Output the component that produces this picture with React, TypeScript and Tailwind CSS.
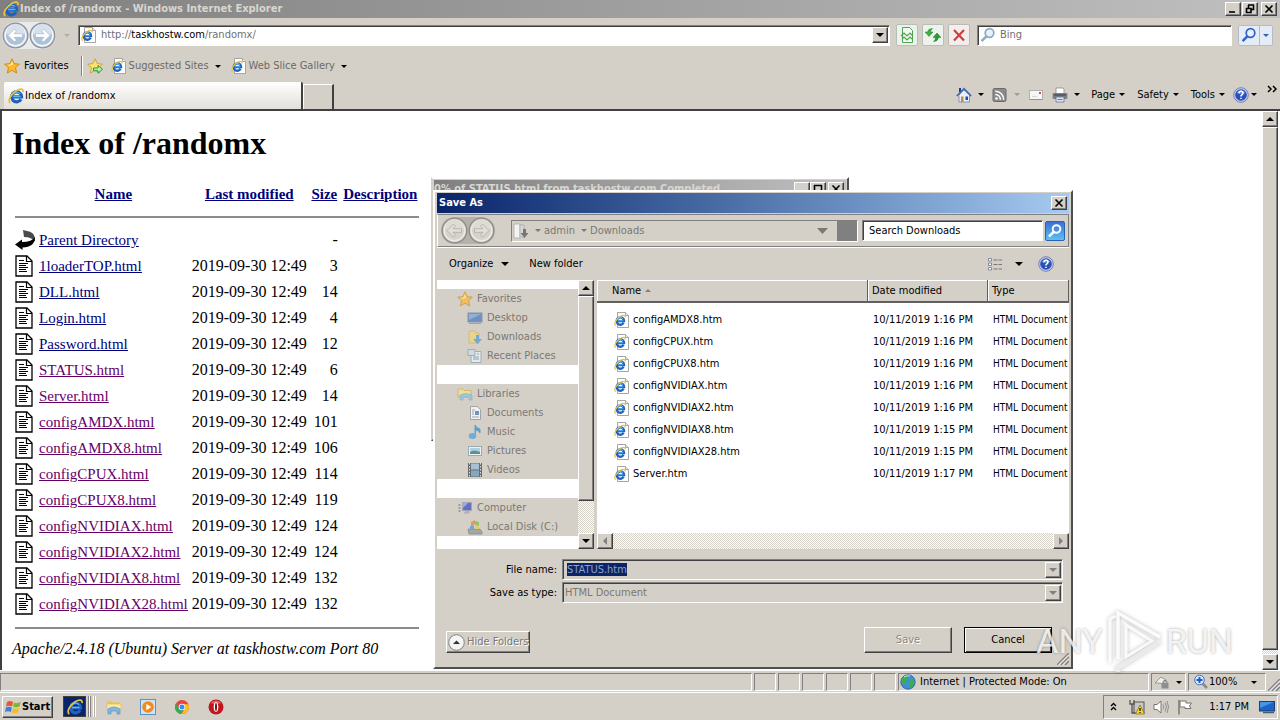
import { useState } from "react";
import type { ReactNode } from "react";
import clsx from "clsx";

const UI_FONT = "font-['DejaVu_Sans_Condensed','Liberation_Sans',sans-serif]";
const RAISED = "bg-[#d4d0c8] border border-t-white border-l-white border-r-[#404040] border-b-[#404040] shadow-[inset_-1px_-1px_0_#808080]";
const SUNKEN = "border border-t-[#808080] border-l-[#808080] border-r-white border-b-white shadow-[inset_1px_1px_0_#404040]";
const CELL = "border border-t-[#808080] border-l-[#808080] border-r-white border-b-white";
const DITHER = "bg-[repeating-conic-gradient(#ffffff_0_25%,#d4d0c8_0_50%)] bg-[length:2px_2px]";

const INDEX_FILES = [
  { name: "1loaderTOP.html", size: "3" },
  { name: "DLL.html", size: "14" },
  { name: "Login.html", size: "4" },
  { name: "Password.html", size: "12" },
  { name: "STATUS.html", size: "6", visited: true },
  { name: "Server.html", size: "14", visited: true },
  { name: "configAMDX.html", size: "101", visited: true },
  { name: "configAMDX8.html", size: "106", visited: true },
  { name: "configCPUX.html", size: "114", visited: true },
  { name: "configCPUX8.html", size: "119", visited: true },
  { name: "configNVIDIAX.html", size: "124", visited: true },
  { name: "configNVIDIAX2.html", size: "124", visited: true },
  { name: "configNVIDIAX8.html", size: "132", visited: true },
  { name: "configNVIDIAX28.html", size: "132", visited: true },
];

const SAVED_FILES = [
  ["configAMDX8.htm", "10/11/2019 1:16 PM"],
  ["configCPUX.htm", "10/11/2019 1:16 PM"],
  ["configCPUX8.htm", "10/11/2019 1:16 PM"],
  ["configNVIDIAX.htm", "10/11/2019 1:16 PM"],
  ["configNVIDIAX2.htm", "10/11/2019 1:16 PM"],
  ["configNVIDIAX8.htm", "10/11/2019 1:15 PM"],
  ["configNVIDIAX28.htm", "10/11/2019 1:15 PM"],
  ["Server.htm", "10/11/2019 1:17 PM"],
];

type IconProps = { className?: string };

function Svg({ size = 16, className, children }: { size?: number; className?: string; children: ReactNode }) {
  return (
    <svg width={size} height={size} viewBox="0 0 16 16" className={clsx("shrink-0", className)} aria-hidden="true">
      {children}
    </svg>
  );
}

function Caret({ className = "text-black" }: IconProps) {
  return (
    <svg width="6" height="3" viewBox="0 0 6 3" className={clsx("shrink-0", className)} aria-hidden="true">
      <path d="M0 0H6L3 3Z" fill="currentColor" />
    </svg>
  );
}

function WideCaret() {
  return (
    <svg width="8" height="4" viewBox="0 0 8 4" className="shrink-0" aria-hidden="true">
      <path d="M0 0H8L4 4Z" fill="#000" />
    </svg>
  );
}

function Arrow({ dir, className = "text-black" }: { dir: "up" | "down" | "left" | "right"; className?: string }) {
  const d = { up: "M0 6H8L4 2Z", down: "M0 2H8L4 6Z", left: "M6 0V8L2 4Z", right: "M2 0V8L6 4Z" }[dir];
  return (
    <svg width="8" height="8" viewBox="0 0 8 8" className={className} aria-hidden="true">
      <path d={d} fill="currentColor" />
    </svg>
  );
}

function IeMark() {
  return (
    <>
      <path d="M13 11.2A5 5 0 1 1 13.6 8.9H5" fill="none" stroke="#1d62bd" strokeWidth="3.2" />
      <path d="M4.200 7A4.600 4.600 0 0 1 12 5.800M5 8.500H12.500" fill="none" stroke="#58b4f2" strokeWidth="1.400" />
      <path d="M2.400 15C-1 13.500 2.800 5.800 8.300 2.700 11.800.7 15.800.2 15 4.200" fill="none" stroke="#edc03a" strokeWidth="1.700" />
    </>
  );
}

function IeIcon({ className }: IconProps) {
  return <Svg className={className}><IeMark /></Svg>;
}

function IePageIcon() {
  return (
    <Svg>
      <path d="M3.5.5H11.5L14.5 3.5V15.5H3.5Z" fill="#fff" stroke="#a5a5a5" />
      <path d="M11.5.5V3.5H14.5" fill="#eee" stroke="#a5a5a5" />
      <g transform="translate(0 2.500) scale(.74)"><IeMark /></g>
    </Svg>
  );
}

function StarIcon({ className }: IconProps) {
  return (
    <Svg className={className}>
      <path d="M8 .8 10.2 5.6 15.4 6.2 11.5 9.7 12.7 15 8 12.3 3.3 15 4.5 9.7.6 6.2 5.8 5.6Z" fill="#fcb92c" stroke="#c77f16" strokeWidth=".8" />
      <path d="M8 3 9.3 6.6 6 8 3 7 6.5 6.4Z" fill="#ffe79b" />
    </Svg>
  );
}

function AddFavoriteIcon() {
  return (
    <Svg>
      <path d="M8 .8 10.2 5.6 15.4 6.2 11.5 9.7 12.7 15 8 12.3 3.3 15 4.5 9.7.6 6.2 5.8 5.6Z" fill="#fde36e" stroke="#c99a1c" strokeWidth=".8" />
      <path d="M6.500 10H11V7.500L15.500 11.300 11 15.200V12.700H6.500Z" fill="#b9efa9" stroke="#2b9a32" strokeWidth="1" />
    </Svg>
  );
}

function HelpIcon() {
  return (
    <Svg>
      <circle cx="8" cy="8" r="7.3" fill="#c3cff0" stroke="#5b6fae" strokeWidth=".8" />
      <circle cx="8" cy="8" r="5.8" fill="#2b50b8" />
      <path d="M3.5 6A5 5 0 0 1 12.5 6Q8 8 3.5 6Z" fill="#6d8fe0" />
      <path d="M6 6.3Q6 4.3 8 4.3T10 6.2Q10 7.4 8 8.6V9.6M8 10.8V12" fill="none" stroke="#fff" strokeWidth="1.5" />
    </Svg>
  );
}

function HomeIcon() {
  return (
    <Svg>
      <path d="M3 1H5V5H3Z" fill="#1d3a94" />
      <path d="M3 8 8 3 13.5 8V15H3Z" fill="#e9eefb" stroke="#6b82b8" strokeWidth=".8" />
      <path d="M.8 9 8 1.6 15.2 9" fill="none" stroke="#4966b1" strokeWidth="1.7" />
      <path d="M5 9.5H7.5V15H5Z" fill="#c58b3e" />
      <path d="M9.5 9.5H12V13H9.5Z" fill="#1c4fa8" />
    </Svg>
  );
}

function FeedIcon() {
  return (
    <Svg>
      <rect x="1" y="1.5" width="13" height="13" rx="1.5" fill="#8b8b8b" stroke="#6b6b6b" />
      <circle cx="4.5" cy="11.5" r="1.3" fill="#fff" />
      <path d="M3.3 7.5A5 5 0 0 1 8.4 12.8M3.3 4.2A8.3 8.3 0 0 1 11.7 12.8" fill="none" stroke="#fff" strokeWidth="1.5" />
    </Svg>
  );
}

function MailIcon() {
  return (
    <Svg>
      <rect x="1.5" y="3.5" width="13" height="9" fill="#f6f6f6" stroke="#b2b2b2" />
      <path d="M1.5 12.5H14.5" stroke="#8794ad" />
      <rect x="11" y="5" width="2" height="2" fill="#d2534b" />
      <path d="M4 9.5H9" stroke="#d8d8d8" />
    </Svg>
  );
}

function PrinterIcon() {
  return (
    <Svg>
      <path d="M4 1H11L12 2V7H4Z" fill="#fff" stroke="#8c8c8c" strokeWidth=".8" />
      <rect x=".6" y="6" width="14.8" height="6" rx="1" fill="#7b7f88" />
      <path d="M2 8H14" stroke="#3c3f46" />
      <path d="M4 10H12V15H4Z" fill="#dfe8f7" stroke="#66718b" strokeWidth=".8" />
      <path d="M5.5 12.5H10.5" stroke="#4c7acb" />
    </Svg>
  );
}

function MagnifierIcon({ color, className }: { color: string; className?: string }) {
  return (
    <Svg className={className}>
      <circle cx="9.5" cy="6" r="4.3" fill="#e6f2fc" stroke={color} strokeWidth="1.7" />
      <path d="M6.3 9.3 1.6 14.2" stroke={color} strokeWidth="2.4" />
    </Svg>
  );
}

function RoundNav({ dir, disabled }: { dir: "left" | "right"; disabled?: boolean }) {
  return (
    <button aria-label={dir === "left" ? "Back" : "Forward"} className="flex">
      <svg width="27" height="27" viewBox="0 0 27 27" aria-hidden="true">
        <circle cx="13.5" cy="13.5" r="12.3" fill={disabled ? "#d0ccc4" : "#c6d2df"} stroke={disabled ? "#8f8c86" : "#8b9199"} strokeWidth="1.3" />
        <circle cx="13.5" cy="13.5" r="10.3" fill={disabled ? "#d6d2ca" : "#adc2d8"} stroke={disabled ? "#eceae6" : "#f5f8fb"} strokeWidth="1.4" />
        <path d="M4 12A9.5 9.5 0 0 1 23 12Q13.5 15 4 12Z" fill={disabled ? "#dedbd4" : "#d6e1ec"} />
        <path
          d="M6 13.500 12.500 7 14.500 9 12 11.700H20.500V15.300H12L14.500 18 12.500 20Z"
          transform={dir === "right" ? "matrix(-1 0 0 1 27 0)" : undefined}
          fill={disabled ? "#e2dfd9" : "#fff"}
          stroke={disabled ? "#a9a6a0" : "#a9b8c8"}
          strokeWidth=".7"
        />
      </svg>
    </button>
  );
}

function TextFileIcon() {
  return (
    <svg width="20" height="22" viewBox="0 0 20 22" aria-hidden="true">
      <path d="M1 1H12L17 6V21H1Z" fill="#fff" stroke="#000" strokeWidth="1.3" />
      <path d="M11.5 1V6.5H17" fill="none" stroke="#000" strokeWidth="1.2" />
      <path d="M4 5.5H9M4 8.5H13M4 10.5H11M4 12.5H13M4 14.5H11M4 16.5H12" stroke="#000" />
    </svg>
  );
}

function BackIcon() {
  return (
    <svg width="20" height="22" viewBox="0 0 20 22" aria-hidden="true">
      <path d="M8 1 12 2Q19 3 20 9V13Q17 8 9 8Z" fill="#4a4a4a" />
      <path d="M20 8Q20 18 7.500 18.500V21L0 15.500 7 10.500V13Q17 13 20 8Z" fill="#000" />
    </svg>
  );
}

function TitleButton({ kind, className }: { kind: "min" | "max" | "restore" | "close"; className?: string }) {
  const d = {
    min: "M1 8H7",
    max: "M1 1.5H9M1.5 1V8.5H8.5V1",
    restore: "M3 1H9M3.5 1V4M8.5 1V6M6 5.5H9M1 4.5H6.5M1.5 4V8.5H6V4",
    close: "M1.5 1.5 8.5 8.5M8.5 1.5 1.5 8.5",
  }[kind];
  return (
    <button aria-label={kind} className={clsx(RAISED, "flex h-[14px] w-[16px] items-center justify-center", className)}>
      <svg width="10" height="10" viewBox="0 0 10 10" aria-hidden="true">
        <path d={d} fill="none" stroke="#000" strokeWidth="1.6" />
      </svg>
    </button>
  );
}

function ScrollButton({ dir, dim }: { dir: "up" | "down" | "left" | "right"; dim?: boolean }) {
  return (
    <button aria-label={`Scroll ${dir}`} className={clsx(RAISED, "flex size-4 shrink-0 items-center justify-center")}>
      <Arrow dir={dir} className={dim ? "text-[#808080]" : "text-black"} />
    </button>
  );
}

function BrowserHeader() {
  return (
    <header className="bg-[#d4d0c8]">
      <div className="flex h-[18px] items-center gap-px bg-linear-to-r from-[#808080] to-[#c0c0c0] pr-[3px] pl-[3px]">
        <IeIcon />
        <h1 className="flex-1 font-bold text-[#d9d6cf]">Index of /randomx - Windows Internet Explorer</h1>
        <TitleButton kind="min" />
        <TitleButton kind="restore" />
        <TitleButton kind="close" className="ml-0.5" />
      </div>

      <div className="flex h-[34px] items-center gap-1 pr-[7px] pl-[2px]">
        <div className="flex rounded-full bg-[#e9eaea]">
          <RoundNav dir="left" />
          <RoundNav dir="right" />
        </div>
        <Caret className="mx-1 text-[#b0aca4]" />
        <div className={clsx(SUNKEN, "flex h-[21px] flex-1 items-center gap-1 bg-white pr-px pl-0.5")}>
          <IePageIcon />
          <a href="#" className="flex-1 text-[#707070]">http://<span className="text-black">taskhostw.com</span>/randomx/</a>
          <ScrollButton dir="down" />
        </div>
        <button aria-label="Compatibility view" className="ml-0.5 rounded-xs border border-[#b5bfb5] bg-[#eef2ee] p-0.5">
          <Svg>
            <path d="M3.5.5H10.5L13.5 3.5V15.5H3.5Z" fill="#f4fbf4" stroke="#4ca44f" />
            <path d="M2 9 5 6 8 9 11 6 14 9M3 12 5 10 8 13 11 10 13 12" fill="none" stroke="#4ca44f" strokeWidth="1.2" />
          </Svg>
        </button>
        <button aria-label="Refresh" className="rounded-xs border border-[#b5bfb5] bg-[#eef2ee] p-0.5">
          <Svg>
            <path d="M4 9.500 0 5H2.500Q3 1.500 7.500 1.500 5.500 2.500 5.500 5H8Z" fill="#3fae45" stroke="#1d7f25" strokeWidth=".5" />
            <path d="M12 6 16 10.500H13.500Q13 14.500 8.500 14.500 10.500 13.500 10.500 10.500H8Z" fill="#2b9a32" stroke="#1d7f25" strokeWidth=".5" />
          </Svg>
        </button>
        <button aria-label="Stop" className="rounded-xs border border-[#bfb9b5] bg-[#f2eeee] p-0.5">
          <Svg><path d="M3 3 13 13.500M13 3 3 13.500" stroke="#c9403c" strokeWidth="2.2" /></Svg>
        </button>
        <div className={clsx(SUNKEN, "ml-[3px] flex h-[21px] w-[255px] items-center gap-1 bg-white px-0.5")}>
          <MagnifierIcon color="#8fa9c0" />
          <input aria-label="Search" placeholder="Bing" className="min-w-0 flex-1 outline-none placeholder:text-[#707070]" />
        </div>
        <div className="ml-0.5 flex h-[21px] rounded-xs border border-[#b4bccb] bg-[#e6ecf6]">
          <button aria-label="Search the web" className="px-0.5"><MagnifierIcon color="#2f62cf" /></button>
          <button aria-label="Search options" className="border-l border-[#b4bccb] px-[3px]"><Caret className="text-[#2c61b4]" /></button>
        </div>
      </div>

      <div className="flex h-7 items-center pl-1">
        <button className="flex items-center gap-1"><StarIcon /> Favorites</button>
        <span className="mx-1 ml-3 h-5 w-0.5 border-l border-[#808080] bg-white" />
        <button aria-label="Add to favorites"><AddFavoriteIcon /></button>
        <button className="ml-2 flex items-center gap-0.5 text-[#6d6a65]"><IePageIcon />Suggested Sites <Caret className="ml-1 text-black" /></button>
        <button className="ml-2.5 flex items-center gap-0.5 text-[#6d6a65]"><IePageIcon />Web Slice Gallery <Caret className="ml-1 text-black" /></button>
      </div>

      <div className="flex h-[29px] items-stretch pr-0.5 pl-1">
        <button className="mt-0.5 flex w-[299px] items-center gap-px rounded-t-xs border-r-2 border-[#404040] bg-linear-to-b from-white to-[#e3e0da] pl-1 text-left">
          <IeIcon /> Index of /randomx
        </button>
        <button aria-label="New tab" className="mt-1 w-[31px] border-t border-r-2 border-l border-t-white border-r-[#404040] border-l-white" />
        <div className="ml-auto flex items-center">
          <button aria-label="Home" className="flex items-center gap-1.5"><HomeIcon /><Caret /></button>
          <button aria-label="Feeds" className="ml-2 flex items-center gap-1.5"><FeedIcon /><Caret className="text-[#a09c94]" /></button>
          <button aria-label="Read mail" className="ml-2"><MailIcon /></button>
          <button aria-label="Print" className="ml-2 flex items-center gap-1.5"><PrinterIcon /><Caret /></button>
          <button className="ml-[11px] flex items-center gap-1">Page <Caret /></button>
          <button className="ml-3 flex items-center gap-1">Safety <Caret /></button>
          <button className="ml-3 flex items-center gap-1">Tools <Caret /></button>
          <button aria-label="Help" className="ml-2 flex items-center gap-0.5"><HelpIcon /><Caret /></button>
          <button aria-label="More" className="mb-3 ml-2.5">
            <svg width="11" height="8" viewBox="0 0 11 8" aria-hidden="true">
              <path d="M1 1 4 4 1 7M6 1 9 4 6 7" fill="none" stroke="#000" strokeWidth="1.5" />
            </svg>
          </button>
        </div>
      </div>
    </header>
  );
}

function IndexPage() {
  return (
    <main className="flex min-h-0 flex-1 border-t-2 border-l-2 border-[#404040] bg-white">
      <div className="flex-1 overflow-hidden pt-3 pl-2.5 font-['Liberation_Serif',serif] text-base leading-5 text-black">
        <h2 className="mb-[18px] text-[32px] leading-10 font-bold">Index of /randomx</h2>
        <table className="border-separate border-spacing-0.5 leading-5">
          <thead>
            <tr className="h-[22px] text-[15px] text-[#00007a] [&_a]:underline">
              <th className="w-[22px] p-px" />
              <th className="p-px"><a href="#">Name</a></th>
              <th className="p-px"><a href="#">Last modified</a></th>
              <th className="w-[29px] p-px"><a href="#">Size</a></th>
              <th className="w-[79px] p-px"><a href="#">Description</a></th>
            </tr>
            <tr className="h-[19px]"><td colSpan={5} className="p-px"><hr className="border-t-2 border-[#8c8c8c]" /></td></tr>
          </thead>
          <tbody>
            <tr>
              <td className="p-px"><BackIcon /></td>
              <td className="p-px text-[15px] text-[#00007a] underline"><a href="#">Parent Directory</a></td>
              <td />
              <td className="p-px text-right">-</td>
              <td />
            </tr>
            {INDEX_FILES.map((file) => (
              <tr key={file.name}>
                <td className="p-px"><TextFileIcon /></td>
                <td className="p-px text-[15px] underline"><a href="#" className={file.visited ? "text-[#660066]" : "text-[#00007a]"}>{file.name}</a></td>
                <td className="p-px whitespace-nowrap">2019-09-30 12:49</td>
                <td className="p-px text-right">{file.size}</td>
                <td />
              </tr>
            ))}
            <tr className="h-[19px]"><td colSpan={5} className="p-px"><hr className="border-t-2 border-[#8c8c8c]" /></td></tr>
          </tbody>
        </table>
        <address>Apache/2.4.18 (Ubuntu) Server at taskhostw.com Port 80</address>
      </div>
      <div className={clsx(DITHER, "mr-0.5 flex w-4 flex-col")}>
        <ScrollButton dir="up" />
        <div className={clsx(RAISED, "mb-1 flex-1")} />
        <ScrollButton dir="down" />
      </div>
    </main>
  );
}

function StatusBar() {
  return (
    <div className="flex h-[22px] shrink-0 items-stretch gap-0.5 border-t border-white bg-[#d4d0c8] pt-0.5 pb-px">
      <div className={clsx(CELL, "flex-1")} />
      {[0, 1, 2, 3, 4, 5].map((n) => <div key={n} className={clsx(CELL, "w-[22px]")} />)}
      <div className={clsx(CELL, "flex w-[251px] items-center gap-1 pl-px")}>
        <Svg>
          <circle cx="8" cy="8" r="7.2" fill="#3d8fd8" stroke="#235a94" strokeWidth=".8" />
          <path d="M3 3Q7 0 8 3T5 7Q6 10 3 11Q0 7 3 3ZM10 6Q14 5 14.5 8T10 14Q8 10 10 6Z" fill="#3fae4a" />
          <path d="M4 3Q7 1 10 2" fill="none" stroke="#cbe8fa" />
        </Svg>
        Internet | Protected Mode: On
      </div>
      <button aria-label="Privacy" className={clsx(CELL, "flex w-[35px] items-center gap-1.5 pl-0.5")}>
        <Svg>
          <path d="M1 9 7 3 12 6 9 10 5 9Z" fill="#eee" stroke="#999" />
          <rect x="7.500" y="9" width="7" height="5.500" fill="#8e8e8e" />
          <path d="M9 9V7.500Q11 5 13 7.500V9" fill="none" stroke="#777" />
        </Svg>
        <Caret />
      </button>
      <button className={clsx(CELL, "flex w-[78px] items-center pl-1")}>
        <Svg>
          <path d="M9 9 14 14" stroke="#8a8a8a" strokeWidth="2.500" />
          <circle cx="6.500" cy="6" r="4.800" fill="#dcecff" stroke="#3a70c8" />
          <path d="M6.500 3V9M3.500 6H9.500" stroke="#1e59c4" strokeWidth="2" />
        </Svg>
        100% <Caret className="mr-2 ml-auto" />
      </button>
      <Grip />
    </div>
  );
}

function Grip() {
  return (
    <svg width="12" height="12" viewBox="0 0 12 12" className="shrink-0 self-end" aria-hidden="true">
      <path d="M0 12 12 0M4 12 12 4M8 12 12 8" stroke="#808080" strokeWidth="1.5" />
      <path d="M1.500 12 12 1.500M5.500 12 12 5.500" stroke="#fff" strokeWidth=".8" />
    </svg>
  );
}

function Taskbar() {
  return (
    <footer className="flex h-7 shrink-0 items-center border-t border-white bg-[#d4d0c8] pr-[2px] pl-[2px]">
      <button className={clsx(RAISED, "flex h-[22px] items-center gap-px px-0.5 font-bold")}>
        <Svg>
          <path d="M2 3Q5 1 8 3L7 7.500Q4 6 1 7.500Z" fill="#e8562d" />
          <path d="M9 3.500Q12 5 15.500 3L14.500 7.500Q11 9 8 7.500Z" fill="#7cb82f" />
          <path d="M1 8.500Q4 7 6.800 8.500L6 13Q3 11.500 0 13Z" fill="#3a80d8" />
          <path d="M8 9Q11 10.500 14.200 8.800L13 13.500Q10 15 7 13.500Z" fill="#f6bd28" />
        </Svg>
        Start
      </button>
      <button aria-label="Internet Explorer" className="ml-2.5 flex h-[21px] w-[23px] items-center justify-center border border-[#404040] bg-[#0a246a]"><IeIcon /></button>
      <span className="ml-0.5 h-[21px] w-[3px] border-x border-[#808080] bg-white" />
      <span className="ml-0.5 h-[21px] w-[3px] border-x border-white bg-[#b5b1a9]" />
      <button aria-label="Explorer" className="ml-2.5">
        <Svg>
          <path d="M1 2H6L7 3.500H14V6H1Z" fill="#e8c657" />
          <path d="M1 5H15V11H1Z" fill="#fbe9a0" stroke="#d9b84e" strokeWidth=".6" />
          <path d="M2 15V10Q8 6 14 10V15H11V12H5V15Z" fill="#7fb7e6" stroke="#4d8cc4" strokeWidth=".6" />
        </Svg>
      </button>
      <button aria-label="Media Player" className="ml-[18px]">
        <Svg>
          <rect x=".5" y=".5" width="15" height="15" fill="#cfe3f5" stroke="#5d92c9" />
          <circle cx="8" cy="8" r="5.800" fill="#f28a1c" />
          <path d="M6.300 4.800V11.200L11.300 8Z" fill="#fff" />
        </Svg>
      </button>
      <button aria-label="Chrome" className="ml-[18px]">
        <Svg>
          <circle cx="8" cy="8" r="7" fill="#e8453c" />
          <path d="M1.900 4.500A7 7 0 0 0 7.500 15L10 9.500 5.500 10Z" fill="#3aa757" />
          <path d="M14.400 5.200A7 7 0 0 1 7.500 15L11 9 8 5.200Z" fill="#fbc116" />
          <circle cx="8" cy="8" r="3.300" fill="#fff" />
          <circle cx="8" cy="8" r="2.500" fill="#4285f4" />
        </Svg>
      </button>
      <button aria-label="Opera" className="ml-[18px]">
        <Svg>
          <circle cx="8" cy="8" r="7.500" fill="#c1161d" />
          <path d="M2.500 4Q8-1 13.500 4Q8 6 2.500 4Z" fill="#e4605f" />
          <ellipse cx="8" cy="8" rx="2.300" ry="4.800" fill="#fff" />
          <ellipse cx="8" cy="8" rx="1" ry="4" fill="#7d0d12" />
        </Svg>
      </button>
      <div className={clsx(CELL, "ml-auto flex h-6 items-center gap-2 pr-0.5 pl-1.5")}>
        <svg width="7" height="9" viewBox="0 0 7 9" aria-hidden="true"><path d="M1 4 3.500 1.500 6 4M1 8 3.500 5.500 6 8" fill="none" stroke="#000" strokeWidth="1.300" /></svg>
        <Svg className="ml-1">
          <rect x="5" y="3" width="10" height="11" fill="#c8c8c8" stroke="#555" />
          <path d="M1 1V5H5V1M3 5V14H6" fill="none" stroke="#555" strokeWidth="1.300" />
          <path d="M11 6 15.500 15H6.500Z" fill="#fbdb25" stroke="#8a7208" strokeWidth=".8" />
          <path d="M11 9V12M11 13V14" stroke="#000" strokeWidth="1.200" />
        </Svg>
        <Svg>
          <path d="M1 5.500H4L8 2V14L4 10.500H1Z" fill="#fff" stroke="#777" />
          <path d="M10 5.500Q11.500 8 10 10.500M12 3.500Q15 8 12 12.500M14 2Q17 8 14 14" fill="none" stroke="#888" strokeWidth=".9" />
        </Svg>
        <Svg>
          <path d="M2 1V15.500" stroke="#777" strokeWidth="1.500" />
          <path d="M3 2H9V4H14.500L12.500 7 14 9.500H8V8H3Z" fill="#fff" stroke="#777" />
        </Svg>
        <span className="ml-2">1:17 PM</span>
        <Svg className="ml-0.5">
          <rect x=".5" y="2.500" width="15" height="9.500" fill="#1b63c6" stroke="#1a3e78" />
          <path d="M1 3H15L1 9Z" fill="#4a94e6" />
          <path d="M4 13.500H15" stroke="#4e5a6b" strokeWidth="1.500" />
        </Svg>
      </div>
    </footer>
  );
}

function DesktopIcon() {
  return <Svg><rect x="1" y="3" width="14" height="9" fill="#4479bd" stroke="#6b7d96" /><path d="M2 4H14L2 10Z" fill="#75a5dc" /><path d="M2 13.500H14" stroke="#8a949f" /></Svg>;
}

function DownloadsIcon() {
  return <Svg><path d="M2 2H8L9 4H12V14H2Z" fill="#f3d871" stroke="#cdb45e" /><path d="M9 6H12V10H15L10.500 15 6 10H9Z" fill="#4a98d8" /></Svg>;
}

function RecentIcon() {
  return <Svg><path d="M4 3.500H14V14.500H4Z" fill="#f1f5f7" stroke="#86a0b0" /><path d="M1 1.500H8V7.500H1Z" fill="#cfe0ea" stroke="#86a0b0" /><path d="M6 9H12M6 11H12M10 6H12" stroke="#5f93b1" /></Svg>;
}

function LibrariesIcon() {
  return <Svg><path d="M1 3H6L7 4.500H14V11H1Z" fill="#f6e68c" stroke="#cdb050" /><path d="M3 14V9Q9 6 15 9V14H12V11H6V14Z" fill="#8cc4de" stroke="#64a3c2" strokeWidth=".7" /></Svg>;
}

function DocumentsIcon() {
  return <Svg><path d="M3.500 1.500H10L13.500 4.500V14.500H3.500Z" fill="#fff" stroke="#8594a3" /><rect x="8" y="6" width="4" height="4" fill="#4a7cb3" /><path d="M5 5H8M5 7H7M5 9H7M5 12H12" stroke="#8594a3" /></Svg>;
}

function MusicIcon() {
  return <Svg><path d="M8 12V1Q9 4 13 5V9Q11 6 9.500 6" fill="#2f8acb" stroke="#2f8acb" /><ellipse cx="5.500" cy="12" rx="3.800" ry="3" fill="#469fdd" /></Svg>;
}

function PicturesIcon() {
  return <Svg><rect x="1.500" y="3.500" width="13" height="9" fill="#fff" stroke="#8a999f" /><path d="M3 5H13V11H3Z" fill="#9ad3ee" /><path d="M3 9Q7 6 13 9V11H3Z" fill="#2c7784" /></Svg>;
}

function VideosIcon() {
  return <Svg><rect x="1" y="1" width="14" height="14" fill="#3b434e" /><rect x="4" y="1.500" width="8" height="6" fill="#93bcd9" /><rect x="4" y="8.500" width="8" height="6" fill="#6499be" /><path d="M2.500 1V15M13.500 1V15" stroke="#dcdcdc" strokeDasharray="1.500 1.500" /></Svg>;
}

function ComputerIcon() {
  return <Svg><rect x="5.500" y="2.500" width="9" height="8" fill="#3545c4" stroke="#8d93b5" /><path d="M6 3H11L6 8Z" fill="#8f9be6" /><path d="M8 11H12V13H7" stroke="#9496a3" fill="#b7b8c3" /><path d="M2.500 4V13" stroke="#84869a" strokeWidth="2" strokeDasharray="2 1" /></Svg>;
}

function DiskIcon() {
  return <Svg><path d="M1 10H13L15 13V15H2Z" fill="#8f9598" stroke="#6b7276" strokeWidth=".8" /><path d="M4 3 8 1V5L4 7Z" fill="#e0862f" /><path d="M8 2 12 3V7L8 6Z" fill="#7cb842" /><path d="M3 7 7 6V10H3Z" fill="#5a92de" /><path d="M8 6.500 12 7.500V10H8Z" fill="#f0cf35" /></Svg>;
}

const TREE = [
  { label: "Favorites", icon: StarIcon, children: [["Desktop", DesktopIcon], ["Downloads", DownloadsIcon], ["Recent Places", RecentIcon]] },
  { label: "Libraries", icon: LibrariesIcon, children: [["Documents", DocumentsIcon], ["Music", MusicIcon], ["Pictures", PicturesIcon], ["Videos", VideosIcon]] },
  { label: "Computer", icon: ComputerIcon, children: [["Local Disk (C:)", DiskIcon]] },
] as { label: string; icon: () => ReactNode; children: [string, () => ReactNode][] }[];

function FolderTree() {
  return (
    <nav className="flex flex-1 flex-col gap-[19px] bg-white pt-[9px] pb-[13px] text-[#7b7872] [&_svg]:opacity-70">
      {TREE.map(({ label, icon: Icon, children }) => (
        <ul key={label} className="bg-[#d4d0c8]">
          <li className="flex h-[19px] items-center gap-1 pl-5"><Icon />{label}</li>
          {children.map(([name, ChildIcon]) => (
            <li key={name} className="flex h-[19px] items-center gap-1 pl-[30px]"><ChildIcon />{name}</li>
          ))}
        </ul>
      ))}
    </nav>
  );
}

function FileList() {
  return (
    <div className="flex min-w-0 flex-1 flex-col bg-white">
      <div className="flex-1 overflow-hidden">
        <table className="w-full table-fixed border-separate border-spacing-0">
          <thead>
            <tr className="h-[23px] [&>th]:border-r [&>th]:border-b-2 [&>th]:border-[#606060] [&>th]:bg-[#d4d0c8] [&>th]:text-left [&>th]:font-normal [&>th]:shadow-[inset_1px_1px_0_#fff]">
              <th className="pl-[15px]">
                <span className="flex items-center gap-1">Name <Caret className="rotate-180 text-[#808080]" /></span>
              </th>
              <th className="w-[120px] pl-1">Date modified</th>
              <th className="w-[81px] pl-1">Type</th>
            </tr>
          </thead>
          <tbody>
            <tr className="h-1.5"><td colSpan={3} /></tr>
            {SAVED_FILES.map(([name, date]) => (
              <tr key={name} className="h-[22px]">
                <td className="pl-[17px]"><span className="flex items-center gap-[3px]"><IePageIcon />{name}</span></td>
                <td className="pl-[5px] whitespace-nowrap">{date}</td>
                <td className="overflow-hidden pl-[5px] text-[10px] whitespace-nowrap">HTML Document</td>
              </tr>
            ))}
          </tbody>
        </table>
      </div>
      <div className={clsx(DITHER, "flex h-4 justify-between")}>
        <ScrollButton dir="left" dim />
        <ScrollButton dir="right" dim />
      </div>
    </div>
  );
}

function SaveAsDialog() {
  const [fileName, setFileName] = useState("STATUS.htm");

  return (
    <section aria-label="Save As" className="absolute top-[190px] left-[433px] w-[640px] border-2 border-t-white border-r-[#505050] border-b-[#505050] border-l-white bg-[#d4d0c8] p-0.5 pt-px">
      <div className="flex h-5 items-center justify-between bg-linear-to-r from-[#0a246a] to-[#a6caf0] pr-0.5 pl-0.5">
        <h2 className="font-bold text-white">Save As</h2>
        <TitleButton kind="close" />
      </div>

      <div className="mt-px flex h-[33px] items-center border border-t-[#808080] border-r-[#808080] border-b-[#808080] border-l-white px-[3px] shadow-[0_1px_0_#fff]">
        <div className="flex rounded-full bg-[#b5b2ac]">
          <RoundNav dir="left" disabled />
          <RoundNav dir="right" disabled />
        </div>
        <div className={clsx(CELL, "ml-4 flex h-[22px] flex-1 items-center text-[#7b7872]")}>
          <Svg className="ml-px">
            <path d="M1 1H7V15H1Z" fill="#f3f3f3" stroke="#aaa" strokeWidth=".8" />
            <path d="M7 2H11V14H7Z" fill="#d8d8d8" stroke="#aaa" strokeWidth=".8" />
            <path d="M10 6H13V10H15.500L11.500 15 7.500 10H10Z" fill="#777" />
          </Svg>
          <Caret className="mr-[3px] ml-1.5 text-[#7b7872]" />admin
          <Caret className="mr-[3px] ml-1.5 text-[#7b7872]" />Downloads
          <svg width="11" height="6" viewBox="0 0 11 6" className="mr-[9px] ml-auto" aria-hidden="true"><path d="M0 0H11L5.500 6Z" fill="#7b7872" /></svg>
          <button aria-label="Refresh" className="h-5 w-5 bg-[#808080]" />
        </div>
        <input aria-label="Search Downloads" defaultValue="Search Downloads" className={clsx(SUNKEN, "ml-1 h-[21px] w-[181px] bg-white px-1.5")} />
        <button aria-label="Search" className="ml-0.5 rounded-xs border border-[#2a62b4] bg-linear-to-b from-[#3d6fd6] to-[#5cc0f2] p-px">
          <Svg>
            <circle cx="9.500" cy="6" r="3.800" fill="none" stroke="#fff" strokeWidth="2" />
            <path d="M6.500 9 2 13.500" stroke="#fff" strokeWidth="2.500" />
          </Svg>
        </button>
      </div>

      <div className="flex h-[33px] items-center pr-[15px] pl-3">
        <button className="flex items-center gap-2">Organize <WideCaret /></button>
        <button className="ml-5">New folder</button>
        <button aria-label="Change view" className="ml-auto flex items-center gap-3">
          <Svg>
            <path d="M1.500 2.500H4.500V5H1.500ZM1.500 7H4.500V9.500H1.500ZM1.500 11.500H4.500V14H1.500Z" fill="#fff" stroke="#75819a" strokeWidth=".9" />
            <path d="M6.500 4H15M6.500 8.500H15M6.500 13H15" stroke="#777" strokeDasharray="4 1" />
          </Svg>
          <WideCaret />
        </button>
        <button aria-label="Help" className="ml-[15px]"><HelpIcon /></button>
      </div>

      <div className="flex h-[269px]">
        <div className="flex w-[157px]">
          <FolderTree />
          <div className={clsx(DITHER, "flex w-4 flex-col")}>
            <ScrollButton dir="up" />
            <div className={clsx(RAISED, "mb-8 flex-1")} />
            <ScrollButton dir="down" />
          </div>
        </div>
        <div className="ml-[3px] flex min-w-0 flex-1">
          <FileList />
        </div>
      </div>

      <form className="grid grid-cols-[120px_1fr] items-center gap-x-[5px] gap-y-0.5 pt-2.5 pr-[6px]" onSubmit={(e) => e.preventDefault()}>
        <label htmlFor="file-name" className="text-right">File name:</label>
        <div className={clsx(SUNKEN, "flex h-[21px] items-center justify-between px-1 pr-px")}>
          <input
            id="file-name"
            value={fileName}
            onChange={(e) => setFileName(e.target.value)}
            className="field-sizing-content h-[13px] bg-[#0a246a] text-[#91a0bd] outline-none"
          />
          <ScrollButton dir="down" dim />
        </div>
        <label htmlFor="file-type" className="text-right">Save as type:</label>
        <div className={clsx(SUNKEN, "flex h-[21px] items-center pr-px pl-0.5")}>
          <select id="file-type" className="flex-1 appearance-none text-[#7b7872] outline-none">
            <option>HTML Document</option>
          </select>
          <ScrollButton dir="down" dim />
        </div>
      </form>

      <div className="flex items-center pt-6 pb-3 pl-[9px]">
        <button className={clsx(RAISED, "mt-1 flex h-[22px] items-center gap-0.5 px-px text-[#7b7872] text-shadow-[1px_1px_0_#fff]")}>
          <svg width="17" height="17" viewBox="0 0 17 17" aria-hidden="true">
            <circle cx="8.500" cy="8.500" r="7.800" fill="#f5f5f5" stroke="#808080" />
            <path d="M5 10H12L8.500 6.500Z" fill="#333" />
          </svg>
          Hide Folders
        </button>
        <button className={clsx(RAISED, "ml-auto h-[26px] w-[88px] text-[#8a877f] text-shadow-[1px_1px_0_#fff]")}>Save</button>
        <button className="mr-[17px] ml-3 h-[26px] w-[88px] border border-black bg-[#d4d0c8] shadow-[inset_1px_1px_0_#fff,inset_-1px_-1px_0_#404040]">Cancel</button>
      </div>
      <div className="absolute right-0.5 bottom-0.5"><Grip /></div>
    </section>
  );
}

function ProgressWindow() {
  return (
    <section aria-label="Download progress" className="absolute top-[177px] left-[431px] h-[264px] w-[418px] border-2 border-t-white border-r-[#505050] border-b-[#505050] border-l-[#d4d0c8] bg-[#d4d0c8] p-px">
      <div className="flex h-[18px] items-center bg-linear-to-r from-[#808080] to-[#c0c0c0] pr-0.5">
        <h2 className="flex-1 font-bold text-[#d9d6cf]">0% of STATUS.html from taskhostw.com Completed</h2>
        <TitleButton kind="min" />
        <TitleButton kind="max" />
        <TitleButton kind="close" className="ml-0.5" />
      </div>
    </section>
  );
}

function Watermark() {
  return (
    <div className="pointer-events-none absolute right-[47px] bottom-[47px] flex items-center gap-[3px] font-['Roboto',sans-serif] text-[34px] leading-none text-white/80 text-shadow-[0_0_3px_rgb(0_0_0/0.35)]">
      <span>ANY</span>
      <svg width="57" height="64" viewBox="0 0 57 64" className="drop-shadow-[0_0_2px_rgba(0,0,0,0.3)]" aria-hidden="true">
        <path d="M4 54V10L10 7" fill="none" stroke="#fff" strokeOpacity=".85" strokeWidth="3" />
        <path d="M12 50V4L54 28" fill="none" stroke="#fff" strokeOpacity=".9" strokeWidth="3.500" />
        <path d="M54 32 12 59V63" fill="none" stroke="#f0f0f0" strokeOpacity=".8" strokeWidth="5" />
        <path d="M20 16V48L46 32Z" fill="none" stroke="#fff" strokeOpacity=".85" strokeWidth="3" />
      </svg>
      <span>RUN</span>
    </div>
  );
}

export default function App() {
  return (
    <div className={clsx(UI_FONT, "relative flex h-screen flex-col overflow-hidden bg-[#d4d0c8] text-[11px] leading-[14px] text-black")}>
      <BrowserHeader />
      <IndexPage />
      <StatusBar />
      <Taskbar />
      <ProgressWindow />
      <SaveAsDialog />
      <Watermark />
    </div>
  );
}
